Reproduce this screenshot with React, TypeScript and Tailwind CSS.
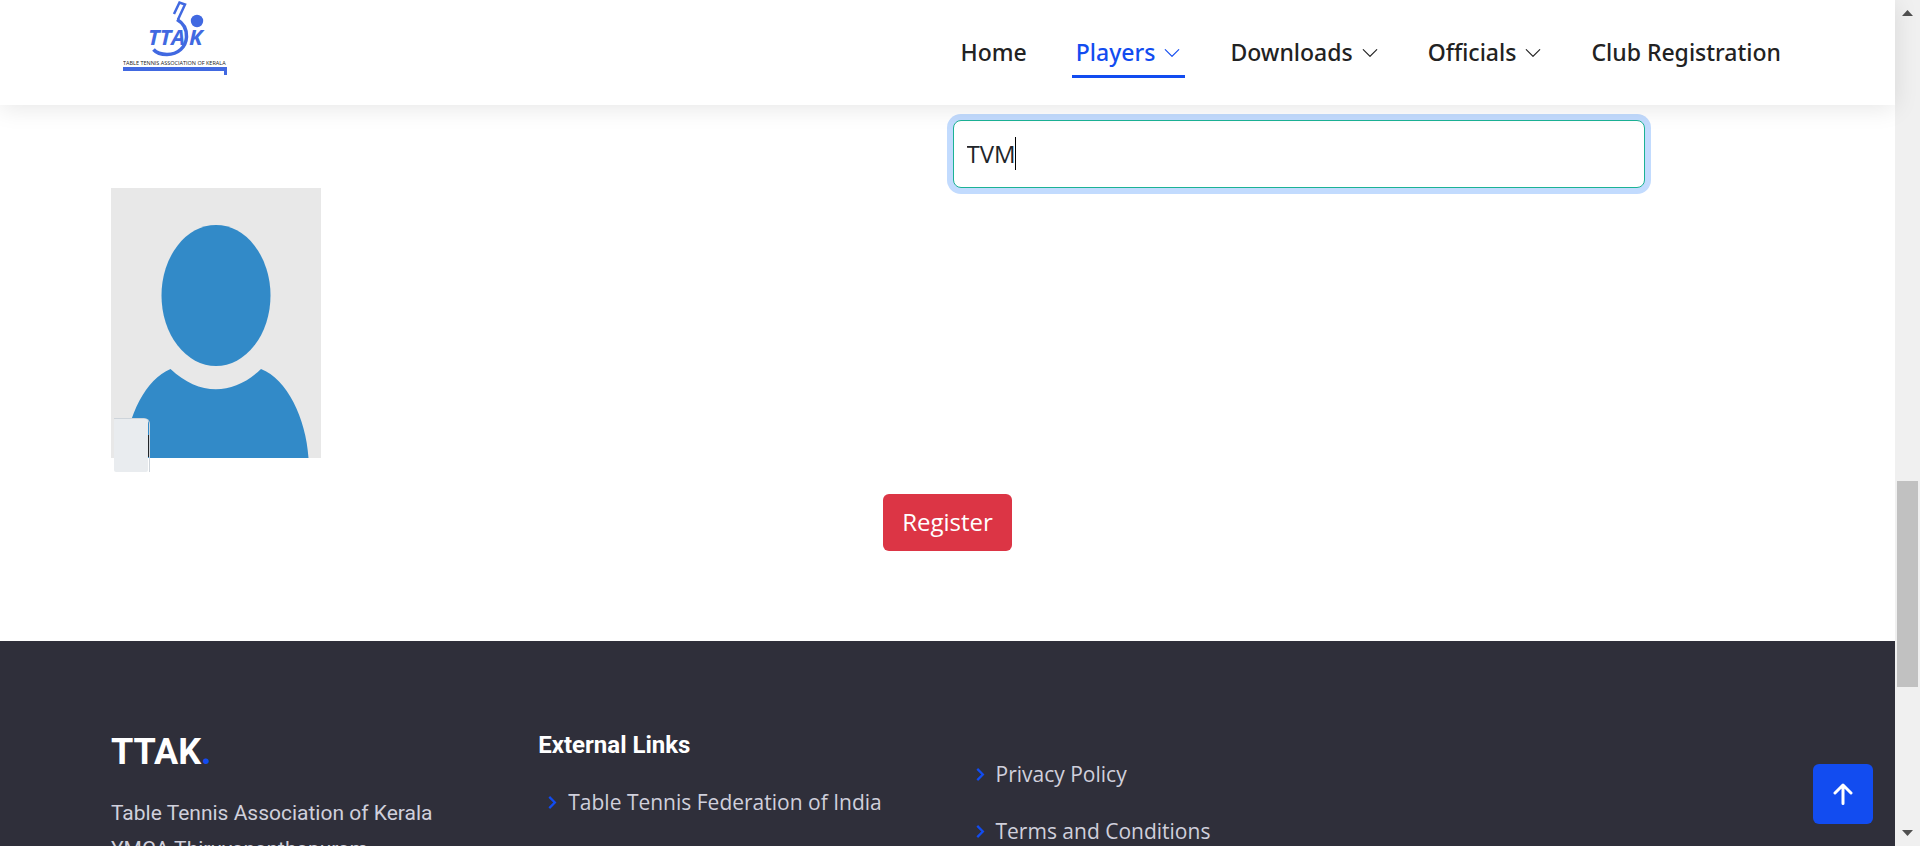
import React from 'react';
import { BsChevronDown } from 'react-icons/bs';
import { BiChevronRight } from 'react-icons/bi';

const navItems = [
  { label: 'Home', menu: false, active: false },
  { label: 'Players', menu: true, active: true },
  { label: 'Downloads', menu: true, active: false },
  { label: 'Officials', menu: true, active: false },
  { label: 'Club Registration', menu: false, active: false },
];

function Logo() {
  return (
    <svg viewBox="0 0 120 80" className="h-20 w-[120px]" role="img" aria-label="TTAK">
      <g fill="none" stroke="#4169e1">
        <path d="M64 14 L69.500 2.500 L75 4.500 L68 19.500" strokeWidth="2.500" />
        <path d="M67 19.500 Q77 25 76.500 37 C76 47 68 54.500 57 54.500 C51 54.500 46.500 53 43.500 49.500" strokeWidth="3.500" />
      </g>
      <circle cx="87" cy="21" r="6.200" fill="#4169e1" />
      <g fill="#4169e1" className="font-['Liberation_Sans_Narrow','Open_Sans',sans-serif] font-bold italic" fontSize="22">
        <text x="38" y="45">TTA</text>
        <text x="79" y="45">K</text>
      </g>
      <svg x="13" y="59" width="104" height="8" viewBox="0 0 208 16">
        <text x="0" y="11" fontSize="11" fill="#222" className="font-['Open_Sans',sans-serif]">
          TABLE TENNIS ASSOCIATION OF KERALA
        </text>
      </svg>
      <path d="M13 67H117V75H114V71H13Z" fill="#4169e1" />
    </svg>
  );
}

function Header() {
  return (
    <header className="relative z-10 h-[105px] shrink-0 bg-white px-[110px] shadow-[0_3px_23px_rgba(0,0,0,0.1)]">
      <div className="flex items-start justify-between">
        <a href="#top">
          <Logo />
        </a>
        <nav className="flex gap-[41px] pt-7 font-['Noto_Sans','Open_Sans',sans-serif]">
          {navItems.map((item) => (
            <a
              key={item.label}
              href="#nav"
              className={
                item.active
                  ? 'flex h-[50px] items-center gap-2 border-b-3 border-[#124cf0] px-1 pt-[2px] text-[23px] font-medium text-[#124cf0]'
                  : 'flex h-[50px] items-center gap-2 border-b-3 border-transparent px-1 pt-[2px] text-[23px] font-medium text-[#222222]'
              }
            >
              {item.label}
              {item.menu && <BsChevronDown className="size-[18px]" />}
            </a>
          ))}
        </nav>
      </div>
    </header>
  );
}

function Avatar() {
  return (
    <svg viewBox="0 0 210 270" className="h-[270px] w-[210px]" role="img" aria-label="Player photo">
      <rect width="210" height="270" fill="#e8e8e8" />
      <ellipse cx="105" cy="107.500" rx="54.500" ry="70.500" fill="#328ac8" />
      <path d="M12 270C17 226 35 191 59.500 181C88 208 122 208 150 181C176 191 195 230 197.500 270Z" fill="#328ac8" />
    </svg>
  );
}

function RegistrationForm() {
  return (
    <form className="px-[111px] pt-[15px] pb-[90px]" onSubmit={(e) => e.preventDefault()}>
      <div className="grid grid-cols-2 gap-x-[10px]">
        <div className="relative col-start-2 w-5/6">
          <input
            type="text"
            aria-label="Place"
            defaultValue="TVM"
            className="block h-[68px] w-full rounded-lg border border-[#1bb295] bg-white px-[13px] pb-[2px] text-2xl text-[#212529] caret-transparent shadow-[0_0_0_6px_#c2dbfe] outline-none"
          />
          <span className="absolute top-[17px] left-[62px] h-[33px] w-px bg-black" />
        </div>
      </div>
      <div className="relative w-[210px]">
        <Avatar />
        <label className="absolute top-[230px] left-[3px] flex h-[54px] w-9 rounded-tr-md border-t border-r border-[#ced4da]">
          <span className="w-[34px] rounded-xs bg-[#e9ecef]" />
          <span className="mt-4 h-[22px] w-px bg-[#212529]" />
          <input type="file" aria-label="Upload photo" className="sr-only" />
        </label>
      </div>
      <div className="mt-9 flex justify-center">
        <button type="submit" className="h-[57px] rounded-md bg-[#dc3545] px-[19px] pb-[2px] text-2xl text-white">
          Register
        </button>
      </div>
    </form>
  );
}

function FooterLink({ label }: { label: string }) {
  return (
    <li className="flex h-[57px] items-center gap-[3px]">
      <BiChevronRight className="size-[27px] shrink-0 text-[#124cf0]" />
      <a href="#link" className="whitespace-nowrap">
        {label}
      </a>
    </li>
  );
}

function Footer() {
  return (
    <footer className="grow bg-[#2f2f3a] px-[111px] pt-[90px] text-[21px] text-[#d0d0dc]">
      <div className="grid grid-cols-4 gap-x-9">
        <div className="pt-px font-['Roboto',sans-serif]">
          <h3 className="text-4xl leading-[40px] font-bold text-white">
            TTAK<span className="text-[#124cf0]">.</span>
          </h3>
          <p className="mt-[23px] leading-9">
            Table Tennis Association of Kerala
            <br />
            YMCA Thiruvananthapuram
          </p>
        </div>
        <div>
          <h4 className="font-['Roboto',sans-serif] text-2xl leading-7 font-bold text-white">External Links</h4>
          <ul className="mt-[15px]">
            <FooterLink label="Table Tennis Federation of India" />
          </ul>
        </div>
        <div>
          <ul className="mt-[15px]">
            <FooterLink label="Privacy Policy" />
            <FooterLink label="Terms and Conditions" />
          </ul>
        </div>
      </div>
    </footer>
  );
}

function ScrollRail() {
  return (
    <div className="flex w-[25px] shrink-0 flex-col items-center bg-[#f0f0f0] py-[10px]" aria-hidden="true">
      <svg viewBox="0 0 11 6" className="h-[6px] w-[11px] shrink-0">
        <path d="M0 6L5.500 0L11 6Z" fill="#505050" />
      </svg>
      <div className="flex w-full grow flex-col items-center">
        <div className="grow-[465]" />
        <div className="w-[21px] grow-[206] bg-[#c1c1c1]" />
        <div className="grow-[143]" />
      </div>
      <svg viewBox="0 0 11 6" className="h-[6px] w-[11px] shrink-0">
        <path d="M0 0L5.500 6L11 0Z" fill="#505050" />
      </svg>
    </div>
  );
}

export default function App() {
  return (
    <div className="flex h-screen overflow-hidden bg-white font-['Open_Sans',sans-serif]">
      <div className="relative flex min-w-0 grow flex-col">
        <Header />
        <RegistrationForm />
        <Footer />
        <button
          type="button"
          aria-label="Back to top"
          className="absolute right-[22px] bottom-[22px] flex size-[60px] items-center justify-center rounded-md bg-[#124cf0]"
        >
          <svg viewBox="0 0 20 22" className="h-[22px] w-5" fill="none" stroke="#fff" strokeWidth="3" strokeLinecap="round" strokeLinejoin="round">
            <path d="M10 20.500V2M2 10L10 2L18 10" />
          </svg>
        </button>
      </div>
      <ScrollRail />
    </div>
  );
}
